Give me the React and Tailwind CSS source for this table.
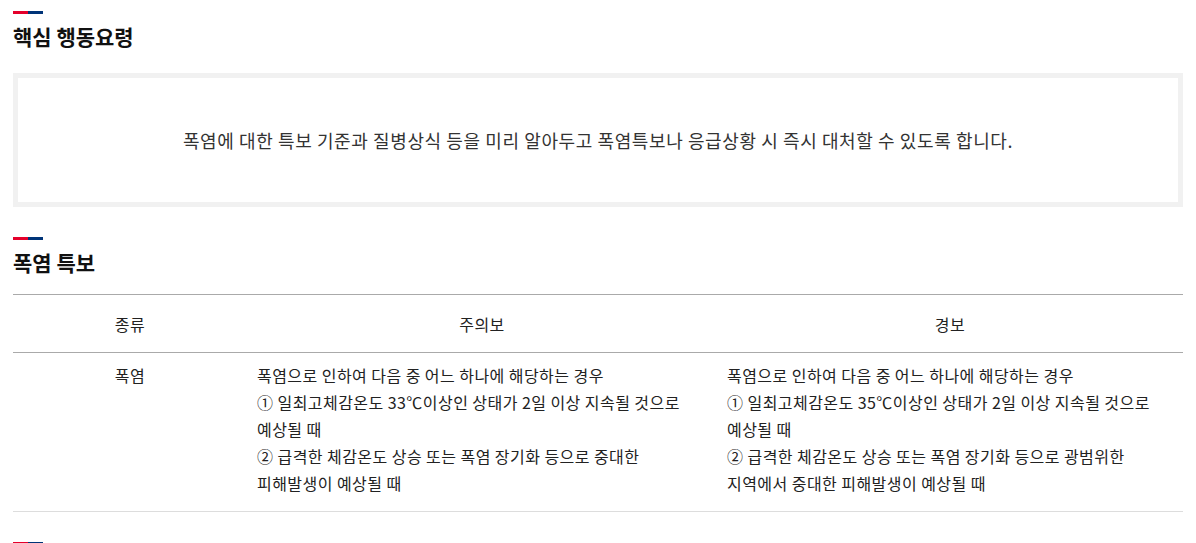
const KR = "font-['Noto_Sans_CJK_KR','Noto_Sans',sans-serif]";

function TitleBar() {
  return (
    <div className="flex h-[3px] w-[30px]">
      <span className="w-[15px] bg-[#e4002b]" />
      <span className="w-[15px] bg-[#003478]" />
    </div>
  );
}

function Heading({ children }) {
  return (
    <div>
      <TitleBar />
      <h3 className="mt-[7px] text-[21px] font-bold leading-[30px] text-[#111]">{children}</h3>
    </div>
  );
}

const rows = [
  {
    kind: "폭염",
    watch: [
      "폭염으로 인하여 다음 중 어느 하나에 해당하는 경우",
      "① 일최고체감온도 33℃이상인 상태가 2일 이상 지속될 것으로",
      "예상될 때",
      "② 급격한 체감온도 상승 또는 폭염 장기화 등으로 중대한",
      "피해발생이 예상될 때",
    ],
    warning: [
      "폭염으로 인하여 다음 중 어느 하나에 해당하는 경우",
      "① 일최고체감온도 35℃이상인 상태가 2일 이상 지속될 것으로",
      "예상될 때",
      "② 급격한 체감온도 상승 또는 폭염 장기화 등으로 광범위한",
      "지역에서 중대한 피해발생이 예상될 때",
    ],
  },
];

export default function App() {
  return (
    <div className={`${KR} bg-white px-[13px] pt-[11px] text-[#222]`}>
      <Heading>핵심 행동요령</Heading>

      <div className="mt-[22px] flex h-[134px] items-center justify-center border-[5px] border-[#f1f1f1] bg-white">
        <p className="text-[18px] tracking-[0.6px] text-[#333]">
          폭염에 대한 특보 기준과 질병상식 등을 미리 알아두고 폭염특보나 응급상황 시 즉시 대처할 수 있도록 합니다.
        </p>
      </div>

      <div className="mt-[30px]">
        <Heading>폭염 특보</Heading>
      </div>

      <table className="mt-[17px] w-full table-fixed border-collapse border-t border-[#aaa] text-[16px] tracking-[0.45px]">
        <colgroup>
          <col className="w-[234px]" />
          <col className="w-[470px]" />
          <col />
        </colgroup>
        <thead>
          <tr className="h-[58px] border-b border-[#aaa]">
            <th className="text-center font-normal">종류</th>
            <th className="text-center font-normal">주의보</th>
            <th className="text-center font-normal">경보</th>
          </tr>
        </thead>
        <tbody>
          {rows.map((r) => (
            <tr key={r.kind} className="border-b border-[#ddd] align-top leading-[27px]">
              <td className="pt-[9px] pb-[14px] text-center">{r.kind}</td>
              <td className="px-[10px] pt-[9px] pb-[14px]">
                {r.watch.map((l) => (
                  <div key={l} className="whitespace-nowrap">{l}</div>
                ))}
              </td>
              <td className="px-[10px] pt-[9px] pb-[14px]">
                {r.warning.map((l) => (
                  <div key={l} className="whitespace-nowrap">{l}</div>
                ))}
              </td>
            </tr>
          ))}
        </tbody>
      </table>

      <div className="mt-[30px] pb-[20px]">
        <TitleBar />
      </div>
    </div>
  );
}
